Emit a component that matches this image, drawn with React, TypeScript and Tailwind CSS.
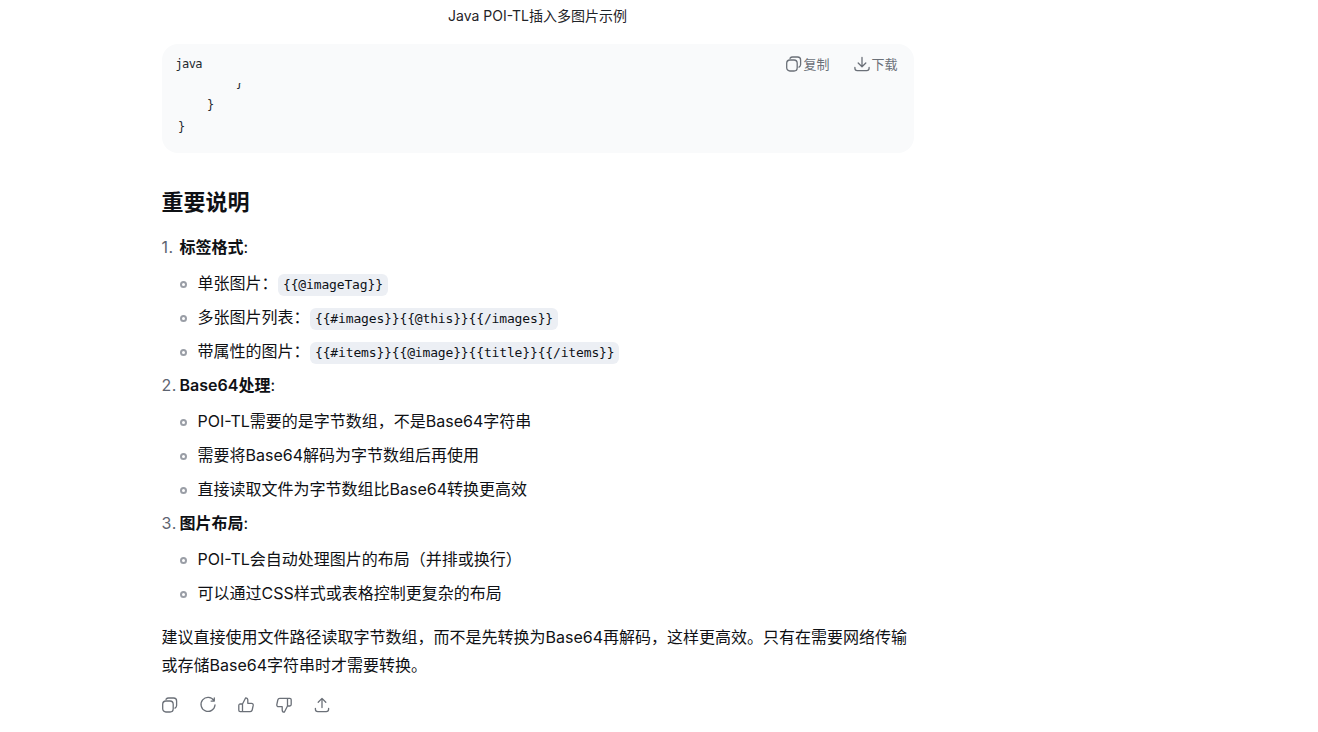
import React from "react";

const Code = ({ children }: { children: React.ReactNode }) => (
  <code className="ml-[0.5px] inline-block h-[22px] rounded-[6px] bg-[#eceff4] px-[5px] align-[0px] font-['DejaVu_Sans_Mono',monospace] text-[13px] leading-[22px] tracking-[-0.15px] text-[#0d1117]">
    {children}
  </code>
);

const Sub = ({ children }: { children: React.ReactNode }) => (
  <li className="flex h-[28px] items-center text-[#0f1115]">
    <span className="ml-[18.5px] mr-[10.5px] mt-[2px] h-[7px] w-[7px] rounded-full border-[2px] border-[#9a9ea6]" />
    <span>{children}</span>
  </li>
);

const Head = ({ n, t }: { n: string; t: string }) => (
  <div className="flex h-[28px] items-center">
    <span className="w-[18px] tracking-[0.6px] text-[#5d6470]">{n}.</span>
    <strong className="font-semibold text-[#0f1115]">{t}</strong>
    <span className="text-[#0f1115]">:</span>
  </div>
);

const Ico = ({ children, s = 18 }: { children: React.ReactNode; s?: number }) => (
  <svg width={s} height={s} viewBox="0 0 18 18" fill="none" stroke="#6b7078" strokeWidth="1.3" strokeLinecap="round" strokeLinejoin="round">
    {children}
  </svg>
);

export default function App() {
  return (
    <div className="min-h-[732px] bg-white font-['Inter','Noto_Sans_CJK_SC',sans-serif] text-[16px] leading-[28px]">
      <div className="ml-[161.5px] w-[752px]">
        <div className="flex h-[32px] items-center justify-center text-[14px] text-[#1f2328]">Java POI-TL插入多图片示例</div>
        <div className="relative mt-[12px] h-[109px] rounded-[16px] bg-[#f9fafb] pt-[9px] font-['DejaVu_Sans_Mono',monospace] text-[12px] leading-[22px] text-[#24292f]">
          <div className="pl-[14px] tracking-[-0.6px]">java</div>
          <div className="mt-[8px] h-[54px] overflow-hidden pl-[16.5px]">
            <pre className="-mt-[11px] font-['DejaVu_Sans_Mono',monospace] text-[12px] leading-[22px]">{"        }\n    }\n}"}</pre>
          </div>
          <div className="absolute right-[16px] top-[9px] flex items-center gap-[24px] font-['Inter','Noto_Sans_CJK_SC',sans-serif] text-[13px] leading-[22px] text-[#6b7078]">
            <span className="flex items-center">
              <Ico><rect x="1.7" y="5" width="10.5" height="11" rx="3.2" /><path d="M5 3.2C5.7 2.4 6.6 2 7.6 2h5c1.6 0 3 1.2 3 3v4.5c0 1.2-.6 2-1.6 2.6" /></Ico>
              <span>复制</span>
            </span>
            <span className="flex items-center">
              <Ico><path d="M9 2.5v9M5.2 8l3.8 3.8L12.8 8M1.9 12.5v.8c0 1.5 1 2.4 2.4 2.4h9.4c1.4 0 2.4-.9 2.4-2.4v-.8" /></Ico>
              <span>下载</span>
            </span>
          </div>
        </div>
        <h2 className="mt-[34px] text-[22px] font-bold leading-[30px] text-[#0f1115]">重要说明</h2>
        <div className="mt-[16px]">
          <Head n="1" t="标签格式" />
          <ul className="mt-[8px] flex flex-col gap-[6px]">
            <Sub>单张图片：<Code>{"{{@imageTag}}"}</Code></Sub>
            <Sub>多张图片列表：<Code>{"{{#images}}{{@this}}{{/images}}"}</Code></Sub>
            <Sub>带属性的图片：<Code>{"{{#items}}{{@image}}{{title}}{{/items}}"}</Code></Sub>
          </ul>
          <div className="mt-[6px]"><Head n="2" t="Base64处理" /></div>
          <ul className="mt-[8px] flex flex-col gap-[6px]">
            <Sub>POI-TL需要的是字节数组，不是Base64字符串</Sub>
            <Sub>需要将Base64解码为字节数组后再使用</Sub>
            <Sub>直接读取文件为字节数组比Base64转换更高效</Sub>
          </ul>
          <div className="mt-[6px]"><Head n="3" t="图片布局" /></div>
          <ul className="mt-[8px] flex flex-col gap-[6px]">
            <Sub>POI-TL会自动处理图片的布局（并排或换行）</Sub>
            <Sub>可以通过CSS样式或表格控制更复杂的布局</Sub>
          </ul>
        </div>
        <p className="mt-[16px] text-[#0f1115]">建议直接使用文件路径读取字节数组，而不是先转换为Base64再解码，这样更高效。只有在需要网络传输或存储Base64字符串时才需要转换。</p>
        <div className="-ml-[0.5px] mt-[17px] flex gap-[20px]">
          <Ico><rect x="1.7" y="5" width="10.5" height="11" rx="3.2" /><path d="M5 3.2C5.7 2.4 6.6 2 7.6 2h5c1.6 0 3 1.2 3 3v4.5c0 1.2-.6 2-1.6 2.6" /></Ico>
          <Ico><path d="M14.9 4.6A7 7 0 1 0 16 9M15.3 1.9v3.2h-3.2" /></Ico>
          <Ico><path d="M5.5 8v7.6M5.5 8H3.2c-.8 0-1.4.6-1.4 1.4v4.8c0 .8.6 1.4 1.4 1.4h10c1 0 1.8-.7 2-1.6l1-4.6c.2-1.1-.6-2.1-1.7-2.1h-3.7V4c0-1.2-.9-2.2-2.1-2.2L5.5 8Z" /></Ico>
          <Ico><path d="M12.5 10V2.4M12.5 10h2.3c.8 0 1.4-.6 1.4-1.4V3.8c0-.8-.6-1.4-1.4-1.4h-10c-1 0-1.8.7-2 1.6l-1 4.6c-.2 1.1.6 2.1 1.7 2.1h3.7V14c0 1.2.9 2.2 2.1 2.2L12.5 10Z" /></Ico>
          <Ico><path d="M9 11.5V2.4M5.2 6.2 9 2.4l3.8 3.8M2.4 12.3v1c0 1.5 1 2.4 2.4 2.4h8.4c1.4 0 2.4-.9 2.4-2.4v-1" /></Ico>
        </div>
      </div>
    </div>
  );
}
